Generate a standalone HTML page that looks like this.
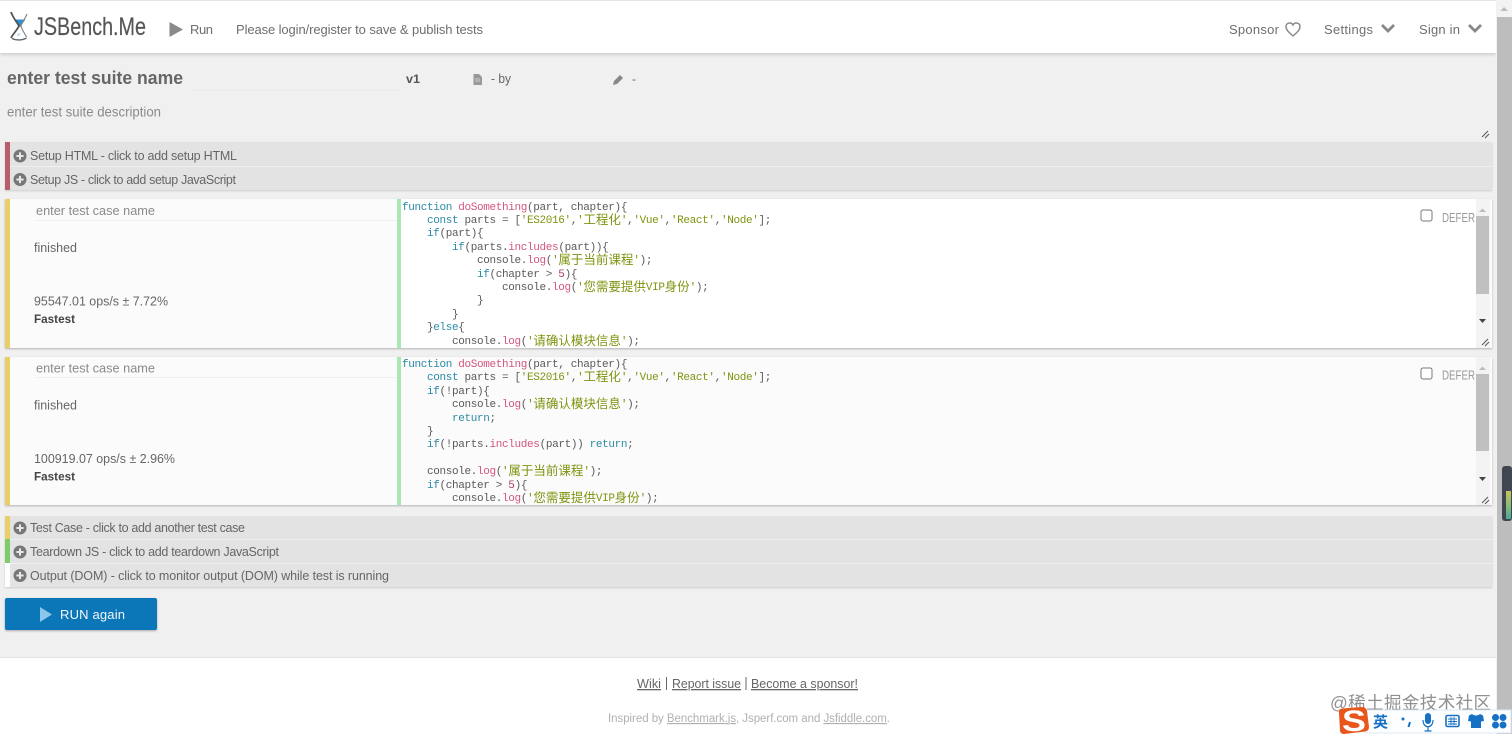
<!DOCTYPE html>
<html lang="zh">
<head>
<meta charset="utf-8">
<title>JSBench.Me</title>
<style>
html,body{margin:0;padding:0;width:1512px;height:734px;overflow:hidden;background:#f0f0f0}
body{position:relative;font-family:"Liberation Sans","Noto Sans CJK SC",sans-serif}
#w{position:absolute;left:0;top:0;width:1512px;height:734px;overflow:hidden;filter:blur(.3px)}
.a{position:absolute}
.code{position:absolute;left:402px;margin:0;font:11px/13.4px "Liberation Mono","Noto Sans CJK SC",monospace;letter-spacing:-.35px;color:#5a5a5a;white-space:pre;overflow:hidden;width:1060px;height:146px}
.code i{font-style:normal;font-size:12.5px;letter-spacing:0;line-height:13.4px;vertical-align:top}
.k{color:#2b8aa6}.f{color:#d2577e}.s{color:#7f9410}.n{color:#a8406a}
svg.o{position:absolute;left:0;top:0;width:1512px;height:734px}
svg text{font-family:"Liberation Sans","Noto Sans CJK SC",sans-serif}
</style>
</head>
<body>
<div id="w">
<div class="a" style="left:0;top:0;width:1496px;height:53px;background:#fff;border-top:1px solid #e4e4e4;box-sizing:border-box;box-shadow:0 1px 4px rgba(0,0,0,.2)"></div>
<div class="a" style="left:0;top:657px;width:1496px;height:77px;background:#fff;border-top:1px solid #e2e2e2;box-sizing:border-box"></div>
<div class="a" style="left:1496px;top:0;width:16px;height:734px;background:#f2f2f2"></div>
<div class="a" style="left:1497px;top:17px;width:15px;height:717px;background:#bdbdbd"></div>

<div class="a" style="left:5px;top:142px;width:1487px;height:48px;background:#e3e3e3;box-shadow:0 1px 2px rgba(0,0,0,.15)"></div>
<div class="a" style="left:5px;top:166px;width:1487px;height:1px;background:#efefef"></div>
<div class="a" style="left:5px;top:142px;width:5px;height:48px;background:#b95c6b"></div>

<div class="a" style="left:5px;top:199px;width:1487px;height:149px;background:#fbfbfb;box-shadow:0 1px 2px rgba(0,0,0,.25)"></div>
<div class="a" style="left:5px;top:199px;width:5px;height:149px;background:#e9cf68"></div>
<div class="a" style="left:397px;top:199px;width:4px;height:149px;background:#a9e8b4"></div>
<div class="a" style="left:401px;top:199px;width:1075px;height:149px;background:#fff"></div>
<div class="a" style="left:1476px;top:199px;width:14px;height:149px;background:#f3f3f3"></div>
<div class="a" style="left:1476px;top:216px;width:13px;height:78px;background:#c0c0c0"></div>
<div class="a" style="left:36px;top:220px;width:360px;height:1px;background:#efefef"></div>

<div class="a" style="left:5px;top:357px;width:1487px;height:148px;background:#fbfbfb;box-shadow:0 1px 2px rgba(0,0,0,.25)"></div>
<div class="a" style="left:5px;top:357px;width:5px;height:148px;background:#e9cf68"></div>
<div class="a" style="left:397px;top:357px;width:4px;height:148px;background:#a9e8b4"></div>
<div class="a" style="left:1476px;top:357px;width:14px;height:148px;background:#f3f3f3"></div>
<div class="a" style="left:1476px;top:374px;width:13px;height:77px;background:#c0c0c0"></div>
<div class="a" style="left:36px;top:377px;width:360px;height:1px;background:#efefef"></div>

<div class="a" style="left:5px;top:516px;width:1487px;height:71px;background:#e3e3e3;box-shadow:0 1px 2px rgba(0,0,0,.15)"></div>
<div class="a" style="left:10px;top:539px;width:1482px;height:1px;background:#efefef"></div>
<div class="a" style="left:10px;top:563px;width:1482px;height:1px;background:#efefef"></div>
<div class="a" style="left:5px;top:516px;width:5px;height:23px;background:#e9cf68"></div>
<div class="a" style="left:5px;top:539px;width:5px;height:24px;background:#7fcb68"></div>
<div class="a" style="left:5px;top:563px;width:5px;height:24px;background:#fff"></div>

<div class="a" style="left:5px;top:598px;width:152px;height:32px;background:#0b76b8;border-radius:2px;box-shadow:0 1px 2px rgba(0,0,0,.3)"></div>

<pre class="code" style="top:201.5px"><span class="k">function</span> <span class="f">doSomething</span>(part, chapter){
    <span class="k">const</span> parts = [<span class="s">'ES2016'</span>,<span class="s">'<i>工程化</i>'</span>,<span class="s">'Vue'</span>,<span class="s">'React'</span>,<span class="s">'Node'</span>];
    <span class="k">if</span>(part){
        <span class="k">if</span>(parts.<span class="f">includes</span>(part)){
            console.<span class="f">log</span>(<span class="s">'<i>属于当前课程</i>'</span>);
            <span class="k">if</span>(chapter &gt; <span class="n">5</span>){
                console.<span class="f">log</span>(<span class="s">'<i>您需要提供</i>VIP<i>身份</i>'</span>);
            }
        }
    }<span class="k">else</span>{
        console.<span class="f">log</span>(<span class="s">'<i>请确认模块信息</i>'</span>);</pre>
<pre class="code" style="top:359px"><span class="k">function</span> <span class="f">doSomething</span>(part, chapter){
    <span class="k">const</span> parts = [<span class="s">'ES2016'</span>,<span class="s">'<i>工程化</i>'</span>,<span class="s">'Vue'</span>,<span class="s">'React'</span>,<span class="s">'Node'</span>];
    <span class="k">if</span>(!part){
        console.<span class="f">log</span>(<span class="s">'<i>请确认模块信息</i>'</span>);
        <span class="k">return</span>;
    }
    <span class="k">if</span>(!parts.<span class="f">includes</span>(part)) <span class="k">return</span>;

    console.<span class="f">log</span>(<span class="s">'<i>属于当前课程</i>'</span>);
    <span class="k">if</span>(chapter &gt; <span class="n">5</span>){
        console.<span class="f">log</span>(<span class="s">'<i>您需要提供</i>VIP<i>身份</i>'</span>);</pre>

<svg class="o" viewBox="0 0 1512 734" xmlns="http://www.w3.org/2000/svg">
<defs>
<g id="plus"><circle r="6.5" fill="#777"/><path d="M-3.6 0H3.6M0-3.6V3.6" stroke="#e8e8e8" stroke-width="2"/></g>
<path id="grip" d="M0 6L6 0M3 7L7 3" stroke="#555" stroke-width="1" fill="none"/>
<linearGradient id="mt" x1="0" y1="0" x2="0" y2="1"><stop offset="0" stop-color="#c9c45c"/><stop offset=".6" stop-color="#7fb87a"/><stop offset="1" stop-color="#4fa59a"/></linearGradient>
</defs>

<!-- logo -->
<path d="M15 19.500H25.500L20 27Z" fill="#2f8fd6"/>
<path d="M11 12C13 18 17 22 19 26C17 30 13 34 11 38" fill="none" stroke="#555" stroke-width="1.800"/>
<path d="M27 14C25 19 22 22 21 26C22 30 25 34 26.500 37" fill="none" stroke="#888" stroke-width="1.200"/>
<path d="M12 38.500C16 40.500 22 40.500 26.500 38" fill="none" stroke="#666" stroke-width="1.300"/>
<path d="M18 33L21 34L17 37Z" fill="#bcd8ee"/>
<text x="34" y="35" font-size="25" fill="#555" stroke="#555" stroke-width=".2" textLength="112" lengthAdjust="spacingAndGlyphs">JSBench.Me</text>

<path d="M169.500 22V37L183 29.500Z" fill="#8a8a8a"/>
<g fill="#6e6e6e" font-size="13">
<text x="190" y="34" textLength="23" lengthAdjust="spacing">Run</text>
<text x="236" y="34" textLength="247" lengthAdjust="spacing">Please login/register to save &amp; publish tests</text>
<text x="1229" y="34" textLength="50" lengthAdjust="spacing">Sponsor</text>
<text x="1324" y="34" textLength="49" lengthAdjust="spacing">Settings</text>
<text x="1419" y="34" textLength="41" lengthAdjust="spacing">Sign in</text>
</g>
<path d="M1293 36C1289 32.500 1286 30 1286 26.500C1286 24 1288 23 1289.800 23C1291.200 23 1292.400 23.800 1293 25C1293.600 23.800 1294.800 23 1296.200 23C1298 23 1300 24 1300 26.500C1300 30 1297 32.500 1293 36Z" fill="none" stroke="#888" stroke-width="1.400"/>
<path d="M1382 25L1388 31L1394 25" fill="none" stroke="#888" stroke-width="2.800"/>
<path d="M1469 25L1475 31L1481 25" fill="none" stroke="#888" stroke-width="2.800"/>

<!-- suite header -->
<text x="7" y="84" font-size="18" font-weight="bold" fill="#666" textLength="176" lengthAdjust="spacingAndGlyphs">enter test suite name</text>
<path d="M192 90H398" stroke="#e8e8e8"/>
<text x="406" y="83" font-size="12" font-weight="bold" fill="#555" textLength="14" lengthAdjust="spacingAndGlyphs">v1</text>
<path d="M473.500 74H479L482 77V85H473.500Z" fill="#999"/>
<path d="M475 79H480M475 81H480" stroke="#ddd" stroke-width=".7"/>
<text x="491" y="83" font-size="12.500" fill="#666" textLength="20" lengthAdjust="spacingAndGlyphs">- by</text>
<path d="M613 85L614 81L620 75L623 78L617 84Z" fill="#888"/>
<text x="632" y="83" font-size="12" fill="#666">-</text>
<text x="7" y="116.500" font-size="14" fill="#8a8a8a" textLength="154" lengthAdjust="spacingAndGlyphs">enter test suite description</text>
<use href="#grip" x="1482" y="131"/>

<!-- bars -->
<use href="#plus" x="20" y="156"/><use href="#plus" x="20" y="179.500"/>
<use href="#plus" x="20" y="528"/><use href="#plus" x="20" y="552"/><use href="#plus" x="20" y="575.500"/>
<g font-size="12.500" fill="#666">
<text x="30" y="160" textLength="207" lengthAdjust="spacing">Setup HTML - click to add setup HTML</text>
<text x="30" y="184" textLength="206" lengthAdjust="spacing">Setup JS - click to add setup JavaScript</text>
<text x="30" y="532" textLength="215" lengthAdjust="spacing">Test Case - click to add another test case</text>
<text x="30" y="556" textLength="249" lengthAdjust="spacing">Teardown JS - click to add teardown JavaScript</text>
<text x="30" y="580" textLength="359" lengthAdjust="spacing">Output (DOM) - click to monitor output (DOM) while test is running</text>
</g>

<!-- cards left -->
<g font-size="13" fill="#666">
<text x="36" y="215" fill="#8a8a8a" textLength="119" lengthAdjust="spacingAndGlyphs">enter test case name</text>
<text x="34" y="252" textLength="43" lengthAdjust="spacingAndGlyphs">finished</text>
<text x="34" y="305.500" textLength="134" lengthAdjust="spacingAndGlyphs">95547.01 ops/s ± 7.72%</text>
<text x="34" y="323" font-size="12" font-weight="bold" fill="#444" textLength="41" lengthAdjust="spacingAndGlyphs">Fastest</text>
<text x="36" y="372.500" fill="#8a8a8a" textLength="119" lengthAdjust="spacingAndGlyphs">enter test case name</text>
<text x="34" y="409.500" textLength="43" lengthAdjust="spacingAndGlyphs">finished</text>
<text x="34" y="463" textLength="141" lengthAdjust="spacingAndGlyphs">100919.07 ops/s ± 2.96%</text>
<text x="34" y="480.500" font-size="12" font-weight="bold" fill="#444" textLength="41" lengthAdjust="spacingAndGlyphs">Fastest</text>
</g>

<!-- defer -->
<rect x="1421" y="210" width="11" height="11" rx="2" fill="#fff" stroke="#777"/>
<rect x="1421" y="368" width="11" height="11" rx="2" fill="#fff" stroke="#777"/>
<g font-size="12.500" fill="#999">
<text x="1442" y="222" textLength="33" lengthAdjust="spacingAndGlyphs">DEFER</text>
<text x="1442" y="379.500" textLength="33" lengthAdjust="spacingAndGlyphs">DEFER</text>
</g>
<g fill="#bbb"><path d="M1479 212L1482.500 208.500L1486 212Z"/><path d="M1479 370L1482.500 366.500L1486 370Z"/></g>
<g fill="#444"><path d="M1479 319H1486L1482.500 323Z"/><path d="M1479 477H1486L1482.500 481Z"/></g>
<use href="#grip" x="1482" y="339"/><use href="#grip" x="1482" y="497"/>
<path d="M1504 7L1500.500 11H1508Z" fill="#bbb"/>

<!-- button -->
<path d="M40 607V622L52 614.500Z" fill="#8cc6ea"/>
<text x="60" y="619" font-size="13" fill="#f4f9fc" textLength="65" lengthAdjust="spacing">RUN again</text>

<!-- footer -->
<g font-size="13" fill="#666" text-decoration="underline">
<text x="637" y="688" textLength="24" lengthAdjust="spacingAndGlyphs">Wiki</text>
<text x="672" y="688" textLength="69" lengthAdjust="spacingAndGlyphs">Report issue</text>
<text x="751" y="688" textLength="107" lengthAdjust="spacingAndGlyphs">Become a sponsor!</text>
</g>
<path d="M666.500 677V690M746 677V690" stroke="#666"/>
<text x="608" y="722" font-size="11.500" fill="#b0b0b0" textLength="282" lengthAdjust="spacing">Inspired by <tspan text-decoration="underline">Benchmark.js</tspan>, Jsperf.com and <tspan text-decoration="underline">Jsfiddle.com</tspan>.</text>

<!-- meter -->
<rect x="1502" y="466" width="10" height="55" rx="3" fill="#3f4650"/>
<rect x="1506" y="491" width="5" height="28" fill="url(#mt)"/>

<!-- watermark + IME -->
<text x="1330" y="709" font-size="17.500" fill="#909090" textLength="161">@稀土掘金技术社区</text>
<rect x="1365" y="710" width="146" height="23" fill="#fdfeff" stroke="#dfe8f2"/>
<path d="M1339 713Q1338 709 1342 708.500L1362 707Q1366 707 1367 711L1369 727Q1369 731 1365 731.500L1344 734Q1341 734 1340 731Z" fill="#e8561c"/>
<text x="1342" y="731" font-size="30" font-weight="bold" fill="#fff" textLength="24" lengthAdjust="spacingAndGlyphs">S</text>
<text x="1373" y="727" font-size="15" font-weight="bold" fill="#1670c4">英</text>
<circle cx="1403" cy="719" r="1.500" fill="#1670c4"/>
<path d="M1410 722L1408.500 727" stroke="#1670c4" stroke-width="2"/>
<rect x="1425" y="713" width="6" height="11" rx="3" fill="#1670c4"/>
<path d="M1423 720C1423 729 1433 729 1433 720M1428 727V731M1424.500 731H1431.500" fill="none" stroke="#1670c4" stroke-width="1.200"/>
<rect x="1446" y="715.500" width="13" height="11" rx="1.500" fill="#fff" stroke="#1670c4" stroke-width="1.600"/>
<path d="M1448 719H1457M1448 721.500H1457M1448 724H1457M1451 717V725M1454 717V725" stroke="#1670c4" stroke-width=".9"/>
<path d="M1472 714L1469 715.500L1468 721L1471 721.500V728H1481V721.500L1484 721L1483 715.500L1480 714C1478 716 1474 716 1472 714Z" fill="#1670c4"/>
<g fill="#1670c4"><circle cx="1495.500" cy="717.500" r="3.500"/><circle cx="1503" cy="717.500" r="3.500"/><circle cx="1495.500" cy="725" r="3.500"/><circle cx="1503" cy="725" r="3.500"/></g>
</svg>
</div>
</body>
</html>
